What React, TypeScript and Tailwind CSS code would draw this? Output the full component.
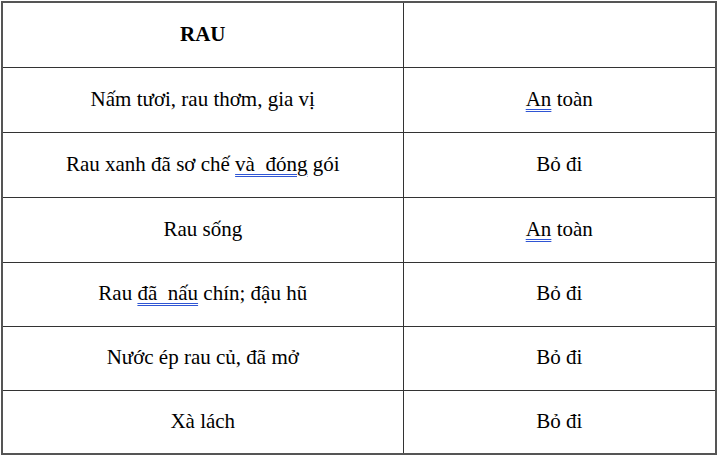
import React from 'react';

const rows: { left: React.ReactNode; right: React.ReactNode }[] = [
  { left: 'Nấm tươi, rau thơm, gia vị', right: <><Squiggle>An</Squiggle> toàn</> },
  { left: <>Rau xanh đã sơ chế <Squiggle>{'và  đóng'}</Squiggle> gói</>, right: 'Bỏ đi' },
  { left: 'Rau sống', right: <><Squiggle>An</Squiggle> toàn</> },
  { left: <>Rau <Squiggle>{'đã  nấu'}</Squiggle> chín; đậu hũ</>, right: 'Bỏ đi' },
  { left: 'Nước ép rau củ, đã mở', right: 'Bỏ đi' },
  { left: 'Xà lách', right: 'Bỏ đi' },
];

function Squiggle({ children }: { children: React.ReactNode }) {
  return (
    <span className="whitespace-pre underline decoration-double decoration-[#2f55d4] decoration-1 underline-offset-[3px]">
      {children}
    </span>
  );
}

export default function App() {
  return (
    <div className="w-[720px] h-[459px] bg-white pt-[1px] pl-[1px] font-['Liberation_Serif',serif] text-[21px] text-black">
      <table className="border-collapse border-2 border-[#555]">
        <tbody>
          <tr className="h-[65px]">
            <td className="w-[401px] border-[1.5px] border-[#333] text-center font-bold">RAU</td>
            <td className="w-[313px] border-[1.5px] border-[#333]"></td>
          </tr>
          {rows.map((r, i) => (
            <tr key={i} className={i < 3 ? 'h-[65px]' : 'h-[64px]'}>
              <td className="border-[1.5px] border-[#333] text-center">{r.left}</td>
              <td className="border-[1.5px] border-[#333] text-center">{r.right}</td>
            </tr>
          ))}
        </tbody>
      </table>
    </div>
  );
}
